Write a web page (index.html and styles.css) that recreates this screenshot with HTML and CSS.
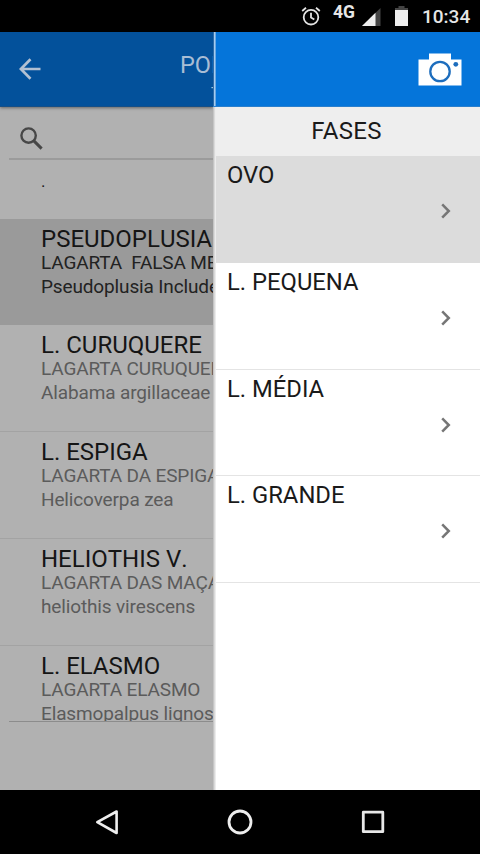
FILE: index.html
```html
<!DOCTYPE html>
<html lang="pt-BR">
<head>
<meta charset="utf-8">
<title>Fases</title>
<link rel="stylesheet" href="styles.css">
</head>
<body>
<div class="phone">
  <header class="status">
    <svg class="alarm" width="20" height="20" viewBox="0 0 20 20" fill="none" stroke="#e4e4e4" stroke-width="1.8"><circle cx="10" cy="11.2" r="7.3"/><path d="M10 6.8v4.7l3.3 2M1.2 5 5 1.8M18.8 5 15 1.8"/></svg>
    <span class="network">4G</span>
    <svg class="signal" width="19" height="18" viewBox="0 0 19 18"><path fill="#444" d="M18.5 0v18H0z"/><path fill="#eee" d="M13.500 4.800V18H0z"/></svg>
    <svg class="battery" width="13" height="20" viewBox="0 0 13 20"><path fill="#444" d="M3.500 0h6v2H13v3H0V2h3.500z"/><path fill="#eee" d="M0 4h13v16H0z"/></svg>
    <span class="clock">10:34</span>
  </header>
  <main class="screen">
    <section class="under">
      <div class="appbar">
        <svg class="back" width="22" height="22" viewBox="0 0 22 22" fill="none" stroke="#b2c0d2" stroke-width="2.700"><path d="M21.500 11H2.200M11.500 1.300 1.900 11l9.600 9.700"/></svg>
        <div class="heading"><div class="heading-main">PONTO</div><div class="heading-sub">-</div></div>
      </div>
      <div class="search">
        <svg width="23" height="23" viewBox="0 0 23 23" fill="none" stroke="#474747"><circle cx="8.600" cy="8.600" r="7.200" stroke-width="2.400"/><path stroke-width="3" d="m13.600 13.600 8 8"/></svg>
      </div>
      <div class="list">
        <div class="blank">.</div>
        <div class="row selected"><h2>PSEUDOPLUSIA</h2><p>LAGARTA&nbsp; FALSA MEDIDEIRA</p><p>Pseudoplusia Includens</p></div>
        <div class="row"><h2>L. CURUQUERE</h2><p>LAGARTA CURUQUERE</p><p>Alabama argillaceae</p></div>
        <div class="row"><h2>L. ESPIGA</h2><p>LAGARTA DA ESPIGA</p><p>Helicoverpa zea</p></div>
        <div class="row"><h2>HELIOTHIS V.</h2><p>LAGARTA DAS MAÇAS</p><p>heliothis virescens</p></div>
        <div class="row"><h2>L. ELASMO</h2><p>LAGARTA ELASMO</p><p>Elasmopalpus lignosellus</p></div>
      </div>
      <div class="list-end"></div>
    </section>
    <aside class="drawer">
      <div class="drawer-bar">
        <svg width="44" height="33" viewBox="0 0 44 33"><path fill="#fff" d="M.5 6.500h10.500V.5h22v6h10.500v26H.5z"/><circle cx="22" cy="18.500" r="9.700" fill="none" stroke="#1d6dbd" stroke-width="2.300"/><circle cx="37.800" cy="11.300" r="2.400" fill="#1d6dbd"/></svg>
      </div>
      <div class="caption">FASES</div>
      <div class="phase active"><span>OVO</span><svg class="chevron" viewBox="0 0 10 16"><path d="m1.200 1.300 6.600 6.700-6.600 6.700"/></svg></div>
      <div class="phase"><span>L. PEQUENA</span><svg class="chevron" viewBox="0 0 10 16"><path d="m1.200 1.300 6.600 6.700-6.600 6.700"/></svg></div>
      <div class="phase"><span>L. MÉDIA</span><svg class="chevron" viewBox="0 0 10 16"><path d="m1.200 1.300 6.600 6.700-6.600 6.700"/></svg></div>
      <div class="phase"><span>L. GRANDE</span><svg class="chevron" viewBox="0 0 10 16"><path d="m1.200 1.300 6.600 6.700-6.600 6.700"/></svg></div>
    </aside>
  </main>
  <nav class="nav">
    <svg width="26" height="28" viewBox="0 0 26 28" fill="none" stroke="#eee" stroke-width="2.600" stroke-linejoin="round"><path d="M22.600 3.500v21.500L3.300 14.200z"/></svg>
    <svg width="26" height="28" viewBox="0 0 26 28" fill="none" stroke="#eee" stroke-width="2.800"><circle cx="13" cy="14" r="11"/></svg>
    <svg width="26" height="28" viewBox="0 0 26 28" fill="none" stroke="#e8e8e8" stroke-width="2.800" stroke-linejoin="round"><path d="M3.300 4.200h19.500v19.500H3.300z"/></svg>
  </nav>
</div>
</body>
</html>
```

FILE: styles.css
```css
* { box-sizing: border-box; }
body { margin: 0; font-family: Roboto, sans-serif; color: #1a1a1a; }
h2, p { margin: 0; font-weight: 400; white-space: nowrap; }
svg { display: block; flex: none; }
.phone { width: 480px; height: 854px; display: flex; flex-direction: column; overflow: hidden; background: #000; }

.status { height: 32px; flex: none; display: flex; justify-content: flex-end; padding-right: 11px; color: #e6e6e6; }
.alarm { margin: 6px 12px 0 0; }
.network { font-size: 17.500px; font-weight: 700; line-height: 24px; width: 29px; }
.signal { margin: 8px 14px 0 0; }
.battery { margin: 6px 14px 0 0; }
.clock { font-size: 19px; font-weight: 500; line-height: 34px; width: 47px; white-space: nowrap; }

.screen { height: 758px; flex: none; display: grid; grid-template-columns: 213px 267px; }
.under { background: #b1b1b1; overflow: hidden; display: flex; flex-direction: column; }
.appbar { height: 75px; flex: none; display: flex; background: #03519b; border-bottom: 1px solid #174f86; box-shadow: 0 1px 3px #666; }
.back { margin: 26px 0 0 19px; }
.heading { margin-left: 139px; color: #a9bdd5; white-space: nowrap; }
.heading-main { font-size: 23.500px; line-height: 28px; padding-top: 19px; }
.heading-sub { font-size: 16px; line-height: 18px; padding-left: 31px; }
.search { height: 53px; flex: none; margin-left: 9px; padding: 20px 0 0 11px; border-bottom: 2px solid #9b9b9b; }

.list { height: 562px; flex: none; overflow: hidden; }
.blank { height: 58.500px; padding: 11px 0 0 41px; font-size: 17px; line-height: 20px; }
.row { height: 106.750px; padding: 6px 0 0 41px; border-bottom: 1px solid #a3a3a3; }
.row h2 { font-size: 24px; line-height: 28px; color: #151515; font-kerning: none; }
.row p { font-size: 19px; line-height: 24px; color: #5b5b5b; letter-spacing: -.14px; }
.row h2 + p { margin-top: -2px; }
.selected { background: #9a9a9a; border-bottom-color: #9a9a9a; }
.selected p { color: #222; }
.list-end { margin: -1px 0 0 9px; border-top: 1px solid #8c8c8c; }

/* The drawer's left edge fades over three pixels. */
.drawer { padding-left: 3px; background: linear-gradient(90deg, #c4c4c4 1px, #dadada 1px 2px, #ececec 2px 3px, #fff 3px); }
.drawer-bar { height: 75px; margin-left: -3px; display: flex; justify-content: flex-end; padding: 21px 18px 0 0; background: linear-gradient(90deg, #2f6ca8 1px, #a5cbee 1px 2px, #6aa8e2 2px 3px, #0575da 3px); border-bottom: 1px solid #2a7fcd; }
.caption { height: 49px; padding-right: 3px; background: #eee; text-align: center; font-size: 24px; letter-spacing: .3px; line-height: 49px; }
.phase { height: 106.750px; display: flex; justify-content: space-between; padding: 5px 29px 0 11px; border-bottom: 1px solid #e4e4e4; font-size: 23.800px; line-height: 28px; }
.active { background: #dcdcdc; border-bottom-color: #dcdcdc; }
.chevron { width: 10px; height: 16px; margin-top: 42px; fill: none; stroke: #767676; stroke-width: 2.500; }

.nav { height: 64px; flex: none; display: flex; justify-content: center; gap: 107px; padding-top: 18px; }
```
